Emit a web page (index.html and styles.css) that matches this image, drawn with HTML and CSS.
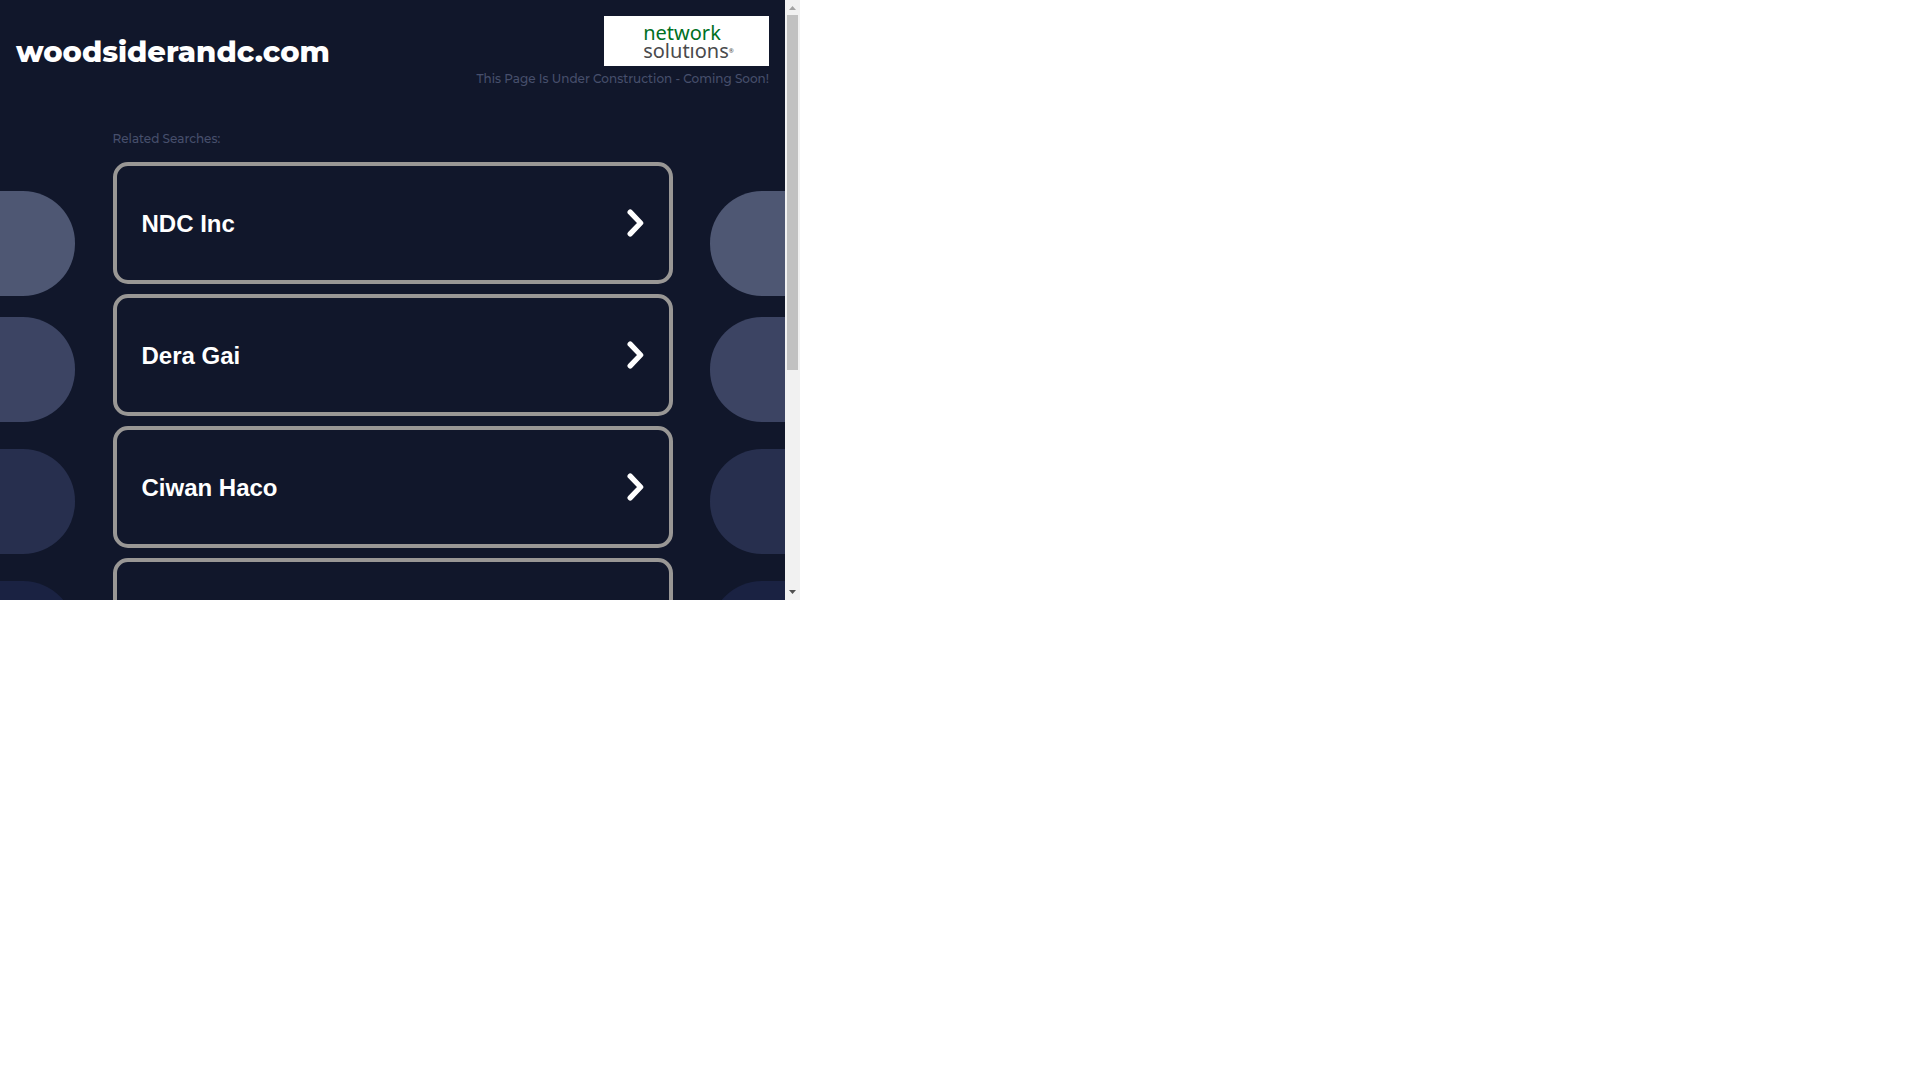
FILE: index.html
```html
<!DOCTYPE html>
<html lang="en">
<head>
<meta charset="utf-8">
<title>woodsiderandc.com</title>
<link rel="stylesheet" href="styles.css">
</head>
<body>
<div class="frame">
  <div class="page">
    <div class="pills pills-left" aria-hidden="true">
      <span class="pill pill-1"></span>
      <span class="pill pill-2"></span>
      <span class="pill pill-3"></span>
      <span class="pill pill-4"></span>
    </div>
    <div class="pills pills-right" aria-hidden="true">
      <span class="pill pill-1"></span>
      <span class="pill pill-2"></span>
      <span class="pill pill-3"></span>
      <span class="pill pill-4"></span>
    </div>
    <header class="header">
      <h1 class="domain">woodsiderandc.com</h1>
      <div class="brand">
        <div class="logo">
          <div class="logo-words">
            <span class="logo-top">network</span>
            <span class="logo-bottom">solutıons<span class="logo-mark">®</span></span>
          </div>
        </div>
        <p class="notice">This Page Is Under Construction - Coming Soon!</p>
      </div>
    </header>
    <main class="searches">
      <h2 class="label">Related Searches:</h2>
      <a class="card" href="#ndc-inc">NDC Inc
        <svg class="chevron" viewBox="0 0 18 28" aria-hidden="true"><path d="M3.200 3.200 13.600 14 3.200 24.800"/></svg></a>
      <a class="card" href="#dera-gai">Dera Gai
        <svg class="chevron" viewBox="0 0 18 28" aria-hidden="true"><path d="M3.200 3.200 13.600 14 3.200 24.800"/></svg></a>
      <a class="card" href="#ciwan-haco">Ciwan Haco
        <svg class="chevron" viewBox="0 0 18 28" aria-hidden="true"><path d="M3.200 3.200 13.600 14 3.200 24.800"/></svg></a>
      <div class="card"></div>
    </main>
  </div>
  <div class="scrollbar" aria-hidden="true">
    <svg class="arrow arrow-up" viewBox="0 0 15 15"><path d="M4 10 7.500 6 11 10z"/></svg>
    <div class="track"><div class="thumb"></div></div>
    <svg class="arrow" viewBox="0 0 15 15"><path d="M4 5 11 5 7.500 9z"/></svg>
  </div>
</div>
</body>
</html>
```
FILE: styles.css
```css
* {
  box-sizing: border-box;
}

body {
  margin: 0;
  background: #fff;
  font-family: Montserrat, Inter, "Liberation Sans", sans-serif;
}

.frame {
  display: flex;
  width: 100%;
  max-width: 800px;
  height: 600px;
}

.page {
  position: relative;
  flex: 1;
  min-width: 0;
  overflow: hidden;
  background: #11172b;
}

/* Rounded bars fading down both sides of the page */
.pills {
  position: absolute;
  top: 191px;
  width: 75px;
  display: grid;
  grid-auto-rows: 105px;
  row-gap: 26px;
}

.pills-left {
  left: 0;
}

.pills-right {
  right: 0;
}

.pills-left .pill {
  border-radius: 0 52px 52px 0;
}

.pills-right .pill {
  border-radius: 52px 0 0 52px;
}

.pill-1 {
  background: #4e5773;
}

.pill-2 {
  background: #3c4463;
  margin: -5px 0 5px;
}

.pill-3 {
  background: #272f4e;
  margin: -4px 0 4px;
}

.pill-4 {
  background: #1a2242;
  margin: -3px 0 3px;
}

.header {
  position: relative;
  display: flex;
  justify-content: space-between;
  align-items: flex-start;
  padding: 16px;
}

.domain {
  margin: 0;
  padding-top: 16px;
  font-size: 29px;
  line-height: 40px;
  font-weight: 800;
  color: #fff;
}

.brand {
  display: flex;
  flex-direction: column;
  align-items: flex-end;
}

.logo {
  display: flex;
  justify-content: center;
  width: 165px;
  height: 50px;
  padding: 8px 0 0 4px;
  background: #fff;
}

.logo-words {
  display: flex;
  flex-direction: column;
  font-family: "Noto Sans", sans-serif;
  font-size: 20px;
  line-height: 18px;
}

.logo-top {
  color: #00701f;
}

.logo-bottom {
  color: #4a4a4c;
}

.logo-mark {
  font-size: 6px;
  line-height: 6px;
  vertical-align: 5px;
}

.notice,
.label {
  margin: 0;
  font-size: 12px;
  line-height: 16px;
  font-weight: 500;
  color: #474f6c;
}

.notice {
  padding-top: 5px;
}

.searches {
  position: relative;
  display: flex;
  flex-direction: column;
  gap: 10px;
  max-width: 560px;
  margin: 28px auto 0;
}

.label {
  padding-bottom: 5px;
}

.card {
  display: flex;
  justify-content: space-between;
  align-items: center;
  height: 122px;
  padding: 2px 24px 0 25px;
  border: 4px solid #999795;
  border-radius: 15px;
  font-family: "Liberation Sans", Arial, sans-serif;
  font-size: 24px;
  line-height: 30px;
  font-weight: 700;
  color: #fff;
  text-decoration: none;
}

.chevron {
  width: 18px;
  height: 28px;
  margin-bottom: 2px;
  fill: none;
  stroke: #fff;
  stroke-width: 5.4;
  stroke-linecap: round;
  stroke-linejoin: round;
}

.scrollbar {
  display: flex;
  flex-direction: column;
  width: 15px;
  background: #f1f1f1;
}

.track {
  flex: 1;
  padding: 0 2px;
}

.thumb {
  height: 355px;
  background: #c1c1c1;
}

.arrow {
  width: 15px;
  height: 15px;
  fill: #505050;
}

.arrow-up {
  fill: #a3a3a3;
}
```
